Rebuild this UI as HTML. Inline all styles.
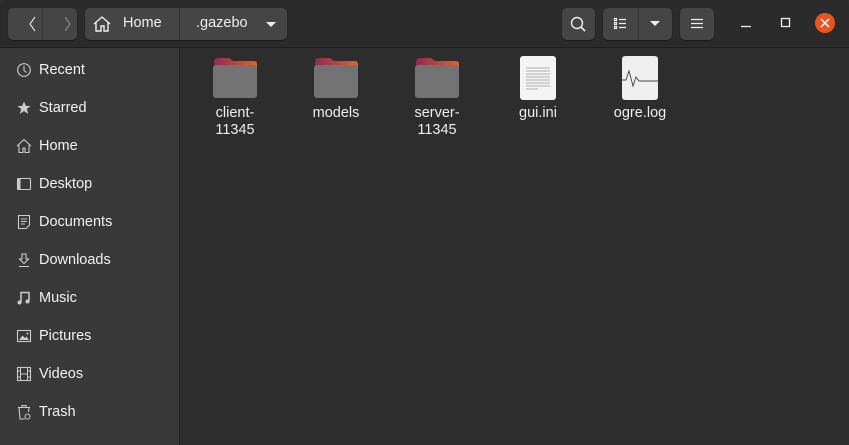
<html><head><style>
body{margin:0;width:849px;height:445px;overflow:hidden;background:#2d2d2d;font-family:"Liberation Sans",sans-serif;font-size:14.5px;color:#eee}
.hdr{position:absolute;left:0;top:0;width:849px;height:47px;background:#2b2b2b;border-bottom:1px solid #1e1e1e;border-radius:8px 8px 0 0}
.btn{position:absolute;top:8px;height:32px;background:#454545;border-radius:5px;box-shadow:0 1px 1px #1a1a1a}
.side{position:absolute;left:0;top:48px;width:179px;height:397px;background:#393939;border-right:1px solid #222}
.it{position:absolute;left:16px;height:20px;display:flex;align-items:center;color:#f2f2f2}
.it svg{width:16px;height:16px;margin-right:7px}
.f{position:absolute;top:56px;width:90px;text-align:center;line-height:17px;color:#eee}
.f svg{display:block;margin:0 auto 5px}
</style></head><body>
<div class="hdr">
<div class="btn" style="left:8px;width:69px"><div style="position:absolute;left:34px;top:0;width:1px;height:32px;background:#333"></div>
<svg width="69" height="32" style="position:absolute;left:0;top:0"><path d="M27 9 L22 16 L27 23" fill="none" stroke="#ddd" stroke-width="1.2"/><path d="M57 9 L62 16 L57 23" fill="none" stroke="#888" stroke-width="1.2"/></svg></div>
<div class="btn" style="left:85px;width:202px"><div style="position:absolute;left:94px;top:0;width:1px;height:32px;background:#333"></div>
<svg width="20" height="20" style="position:absolute;left:7px;top:6px"><path d="M2 10 L10 3 L18 10 M4 9 V17 H9 V12 H12 V17 H16 V9" fill="none" stroke="#eee" stroke-width="1.4"/></svg>
<span style="position:absolute;left:38px;top:7px">Home</span><span style="position:absolute;left:111px;top:7px">.gazebo</span>
<svg width="12" height="8" style="position:absolute;left:180px;top:13px"><path d="M1 1 H11 L6 6Z" fill="#eee"/></svg></div>
<div class="btn" style="left:562px;width:33px"><svg width="33" height="32"><circle cx="15" cy="15" r="5.5" fill="none" stroke="#eee" stroke-width="1.4"/><path d="M19 19 L23 23" stroke="#eee" stroke-width="1.6"/></svg></div>
<div class="btn" style="left:603px;width:69px"><div style="position:absolute;left:35px;top:0;width:1px;height:32px;background:#333"></div>
<svg width="69" height="32" style="position:absolute;left:0;top:0"><g fill="none" stroke="#eee" stroke-width="1.2"><rect x="11.5" y="10.5" width="2" height="2"/><rect x="11.5" y="14.5" width="2" height="2"/><rect x="11.5" y="18.5" width="2" height="2"/><path d="M16 11.5H23M16 15.5H23M16 19.5H23"/></g><path d="M47 13 H57 L52 18Z" fill="#eee"/></svg></div>
<div class="btn" style="left:680px;width:34px"><svg width="34" height="32"><path d="M11 11.5H23M11 15.5H23M11 19.5H23" stroke="#eee" stroke-width="1.2"/></svg></div>
<svg width="849" height="47" style="position:absolute;left:0;top:0"><path d="M741 26.5H751" stroke="#eee" stroke-width="1.3"/><rect x="781.5" y="18.5" width="8" height="8" fill="none" stroke="#eee" stroke-width="1.3"/><circle cx="825" cy="23" r="10" fill="#e95420"/><path d="M821 19L829 27M829 19L821 27" stroke="#fff" stroke-width="1.5"/></svg>
</div>
<div class="side">
<div class="it" style="top:12px"><svg viewBox="0 0 16 16"><circle cx="8" cy="8" r="6.3" fill="none" stroke="#ccc" stroke-width="1.1"/><path d="M8 4V8.5L10.5 10.5" fill="none" stroke="#ccc" stroke-width="1.1"/></svg>Recent</div>
<div class="it" style="top:50px"><svg viewBox="0 0 16 16"><path d="M8 1.5L9.9 6H14.5L10.8 9L12.2 14L8 11L3.8 14L5.2 9L1.5 6H6.1Z" fill="#ccc"/></svg>Starred</div>
<div class="it" style="top:88px"><svg viewBox="0 0 16 16"><path d="M1 8L8 1.5L15 8M3 7V14.5H7V10H9V14.5H13V7" fill="none" stroke="#ccc" stroke-width="1.1"/></svg>Home</div>
<div class="it" style="top:126px"><svg viewBox="0 0 16 16"><rect x="1.5" y="2.5" width="13" height="11" rx="1" fill="none" stroke="#ccc" stroke-width="1.1"/><rect x="1.5" y="2.5" width="3" height="11" fill="#ccc"/></svg>Desktop</div>
<div class="it" style="top:164px"><svg viewBox="0 0 16 16"><path d="M2.5 1.5H13.5V11L10 14.5H2.5Z" fill="none" stroke="#ccc" stroke-width="1.1"/><path d="M5 5H11M5 7.5H11M5 10H9" stroke="#ccc"/></svg>Documents</div>
<div class="it" style="top:202px"><svg viewBox="0 0 16 16"><path d="M6 2H10V7H12.5L8 11.5L3.5 7H6Z M3 14.5H13" fill="none" stroke="#ccc" stroke-width="1.1"/></svg>Downloads</div>
<div class="it" style="top:240px"><svg viewBox="0 0 16 16"><path d="M5 12V2.5H13V11" fill="none" stroke="#ccc" stroke-width="1.5"/><circle cx="3.5" cy="12.5" r="2" fill="#ccc"/><circle cx="11.5" cy="11.5" r="2" fill="#ccc"/></svg>Music</div>
<div class="it" style="top:278px"><svg viewBox="0 0 16 16"><rect x="1.5" y="2.5" width="13" height="11" fill="none" stroke="#ccc" stroke-width="1.1"/><path d="M3 12L6.5 7.5L9 10L10.5 8.5L13 12Z" fill="#ccc"/><circle cx="11.5" cy="5.5" r="1" fill="#ccc"/></svg>Pictures</div>
<div class="it" style="top:316px"><svg viewBox="0 0 16 16"><rect x="1.5" y="1.5" width="13" height="13" fill="none" stroke="#ccc" stroke-width="1.1"/><path d="M4.5 1.5V14.5M11.5 1.5V14.5M4.5 8H11.5M1.5 5H4.5M1.5 11H4.5M11.5 5H14.5M11.5 11H14.5" stroke="#ccc"/></svg>Videos</div>
<div class="it" style="top:354px"><svg viewBox="0 0 16 16"><path d="M2 3.5H14M6 3.5V1.5H10V3.5M3 3.5L4 15H9M13 3.5L12.5 8" fill="none" stroke="#ccc" stroke-width="1.1"/><circle cx="11.5" cy="12.5" r="2.5" fill="none" stroke="#ccc"/></svg>Trash</div>
</div>
<svg width="0" height="0"><defs><linearGradient id="tab" x1="0" x2="1"><stop offset="0" stop-color="#8a2d55"/><stop offset="1" stop-color="#e95e2a"/></linearGradient></defs></svg>
<div class="f" style="left:190px"><svg width="48" height="44"><path d="M3 6Q3 2 7 2H18L22 5H43Q46 5 46 8V20H3Z" fill="url(#tab)"/><rect x="2" y="9" width="44" height="33" rx="3" fill="#737373"/></svg>client-<br>11345</div>
<div class="f" style="left:291px"><svg width="48" height="44"><path d="M3 6Q3 2 7 2H18L22 5H43Q46 5 46 8V20H3Z" fill="url(#tab)"/><rect x="2" y="9" width="44" height="33" rx="3" fill="#737373"/></svg>models</div>
<div class="f" style="left:392px"><svg width="48" height="44"><path d="M3 6Q3 2 7 2H18L22 5H43Q46 5 46 8V20H3Z" fill="url(#tab)"/><rect x="2" y="9" width="44" height="33" rx="3" fill="#737373"/></svg>server-<br>11345</div>
<div class="f" style="left:493px"><svg width="48" height="44"><rect x="6" y="0" width="36" height="44" rx="3" fill="#f4f4f4"/><path d="M12 12H36M12 15H36M12 18H36M12 21H36M12 24H36M12 27H36M12 30H36M12 33H24" stroke="#999" stroke-width="0.8"/></svg>gui.ini</div>
<div class="f" style="left:595px"><svg width="48" height="44"><rect x="6" y="0" width="36" height="44" rx="3" fill="#efefef"/><path d="M6 24H10L13 15L17 30L20 21L23 25H42" fill="none" stroke="#444" stroke-width="0.9"/></svg>ogre.log</div>
</body></html>
